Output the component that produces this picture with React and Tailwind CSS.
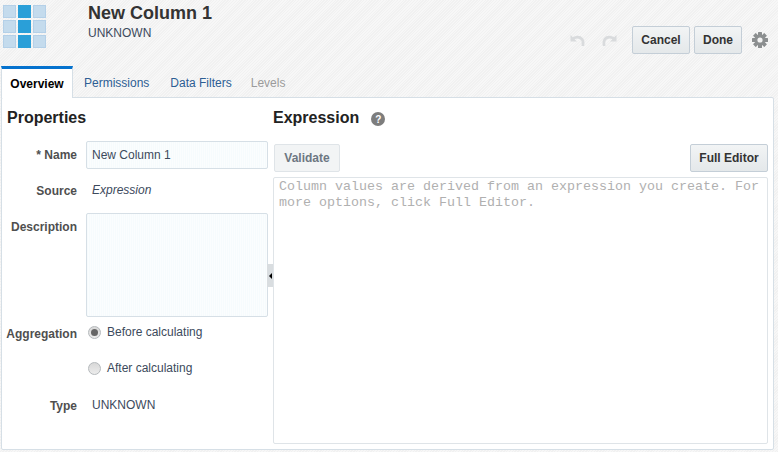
import React from 'react';

const stripes = 'bg-[#f3f3f3] bg-[repeating-linear-gradient(135deg,#f7f7f7_0px,#f7f7f7_1px,#f1f1f1_1px,#f1f1f1_2px)]';
const fieldBg = 'bg-[#f8fcfd] bg-[repeating-linear-gradient(90deg,#f6fbfd_0px,#f6fbfd_1px,#fbfdfe_1px,#fbfdfe_2px)]';
const btn = 'h-7 rounded-[2px] border border-[#c4ced7] bg-gradient-to-b from-[#f2f4f5] to-[#e4e8ea] text-xs font-bold text-[#333] flex items-center justify-center';

// 3x3 column logo, middle column is the dark one
const Logo = () => (
  <svg width="43" height="43" viewBox="0 0 43 43" className="block">
    {[0, 15, 30].map((y) =>
      [0, 15, 30].map((x) => (
        <rect key={`${x}-${y}`} x={x + 0.5} y={y + 0.5} width="12" height="12" fill={x === 15 ? '#2a9fd8' : '#c4dbed'} stroke={x === 15 ? '#2a9fd8' : '#b4d0e8'} />
      ))
    )}
  </svg>
);

const Undo = ({ flip }) => (
  <svg width="15" height="13" viewBox="0 0 15 13" className={flip ? '-scale-x-100' : ''}>
    <path d="M0.5 1 L0.5 7.5 L7 7.5 L4.6 5.2 C6.8 3.8 10 4.3 11.2 6.6 C11.7 7.6 11.8 9 11.6 12 L14.2 12 C14.8 8.5 14.4 6 13 4.2 C10.8 1.4 6.6 0.9 2.9 3.3 Z" fill="#d9dbdd" />
  </svg>
);

const Gear = () => (
  <svg width="16" height="16" viewBox="0 0 16 16">
    <g fill="#8c8f90">
      {[0, 45, 90, 135].map((r) => (
        <rect key={r} x="6" y="0" width="4" height="16" rx="0.5" transform={`rotate(${r} 8 8)`} />
      ))}
    </g>
    <circle cx="8" cy="8" r="5.4" fill="#8c8f90" />
    <circle cx="8" cy="8" r="2.6" fill="#f3f3f3" />
  </svg>
);

const Radio = ({ checked }) => (
  <span className="w-[13px] h-[13px] rounded-full border border-[#b5b9bc] bg-gradient-to-b from-[#d8d8d8] to-[#ececec] flex items-center justify-center">
    {checked && <span className="w-[7px] h-[7px] rounded-full bg-[#666]" />}
  </span>
);

const Label = ({ children, className = '' }) => (
  <div className={`w-[76px] text-right text-xs font-bold text-[#4f4f4f] ${className}`}>{children}</div>
);

export default function App() {
  return (
    <div className={`w-[778px] h-[452px] overflow-hidden flex flex-col text-[#333] font-['Liberation_Sans',Arial,sans-serif] ${stripes}`}>
      {/* header */}
      <div className="h-[66px] flex shrink-0">
        <div className="pl-[3px] pt-[5px] w-[88px]">
          <Logo />
        </div>
        <div className="pt-[1px]">
          <div className="text-lg font-bold leading-[24px] text-[#333]">New Column 1</div>
          <div className="text-xs leading-[14px] mt-[1px] text-[#3c4a5c]">UNKNOWN</div>
        </div>
        <div className="ml-auto mr-[10px] pt-[26px] flex items-start">
          <div className="flex items-center h-7 gap-[17px] mr-[15px]">
            <Undo />
            <Undo flip />
          </div>
          <button className={`${btn} w-[58px]`}>Cancel</button>
          <button className={`${btn} w-[48px] ml-1`}>Done</button>
          <div className="h-7 flex items-center ml-[10px]">
            <Gear />
          </div>
        </div>
      </div>

      {/* tabs */}
      <div className="h-[32px] flex pl-[1px] text-xs shrink-0 relative z-10">
        <div className="w-[72px] h-[32px] border-t-[3px] border-x border-t-[#0572ce] border-x-[#d6dfe6] bg-white font-bold text-black flex items-center justify-center">Overview</div>
        <div className="h-[31px] pt-[3px] flex items-center ml-[11px] text-[#2d5e94]">Permissions</div>
        <div className="h-[31px] pt-[3px] flex items-center ml-[21px] text-[#2d5e94]">Data Filters</div>
        <div className="h-[31px] pt-[3px] flex items-center ml-[19px] text-[#9b9b9b]">Levels</div>
      </div>

      {/* panel */}
      <div className="-mt-px ml-[1px] w-[773px] h-[353px] border border-[#d6dfe6] rounded-[2px] bg-white flex relative">
        <div className="w-[271px] shrink-0">
          <div className="pl-[5px] pt-[10px] text-base font-bold leading-[19px] text-[#222]">Properties</div>

          <div className="flex items-center mt-[14px] h-7">
            <Label className="-ml-[1px]">* Name</Label>
            <div className={`ml-[9px] w-[182px] h-7 border border-[#d6dfe6] rounded-[2px] flex items-center pl-[5px] text-xs text-[#3c4a5c] ${fieldBg}`}>New Column 1</div>
          </div>

          <div className="flex items-center mt-[13px] h-[18px]">
            <Label className="-ml-[1px]">Source</Label>
            <div className="ml-[15px] -mt-[2px] text-xs italic text-[#3c4a5c]">Expression</div>
          </div>

          <div className="flex items-start mt-[13px]">
            <Label className="-ml-[1px] pt-[6px]">Description</Label>
            <div className={`ml-[9px] w-[182px] h-[104px] border border-[#d6dfe6] rounded-[2px] ${fieldBg}`} />
          </div>

          <div className="flex items-center mt-[7px] h-[18px]">
            <Label className="-ml-[1px] mt-[2px]">Aggregation</Label>
            <div className="ml-[11px] -mt-[2px] flex items-center gap-[6px] text-xs text-[#3c4a5c]">
              <Radio checked />
              <span className="-mt-[1px]">Before calculating</span>
            </div>
          </div>

          <div className="flex items-center mt-[17px] h-[18px] pl-[86px]">
            <div className="flex items-center gap-[6px] text-xs text-[#3c4a5c]">
              <Radio />
              <span>After calculating</span>
            </div>
          </div>

          <div className="flex items-center mt-[19px] h-[18px]">
            <Label className="-ml-[1px] mt-[1px]">Type</Label>
            <div className="ml-[15px] -mt-[1px] text-xs text-[#3c4a5c]">UNKNOWN</div>
          </div>
        </div>

        {/* splitter handle */}
        <div className="absolute left-[265px] top-[166px] w-[6px] h-[23px] bg-[#d9dde0] flex items-center justify-center">
          <span className="border-y-[3px] border-r-[3px] border-y-transparent border-r-black" />
        </div>

        <div className="w-[495px] shrink-0">
          <div className="flex items-center pt-[2px] h-[37px]">
            <span className="text-base font-bold text-[#222]">Expression</span>
            <span className="ml-[12px] mt-[3px] w-[14px] h-[14px] rounded-full bg-[#7d7d7d] text-white text-[10px] font-bold flex items-center justify-center">?</span>
          </div>
          <div className="flex justify-between mt-[9px]">
            <button className="ml-[1px] w-[66px] h-7 rounded-[2px] border border-[#dfe4e8] bg-[#f2f4f5] text-xs font-bold text-[#6d7782]">Validate</button>
            <button className={`${btn} w-[78px]`}>Full Editor</button>
          </div>
          <div className="mt-[5px] h-[267px] border border-[#dfe4e8] rounded-[2px] bg-white px-[5px] pt-[1px] font-['Liberation_Mono',monospace] text-[13.34px] leading-[16px] text-[#b0b0b0]">
            Column values are derived from an expression you create. For more options, click Full Editor.
          </div>
        </div>
      </div>
    </div>
  );
}
